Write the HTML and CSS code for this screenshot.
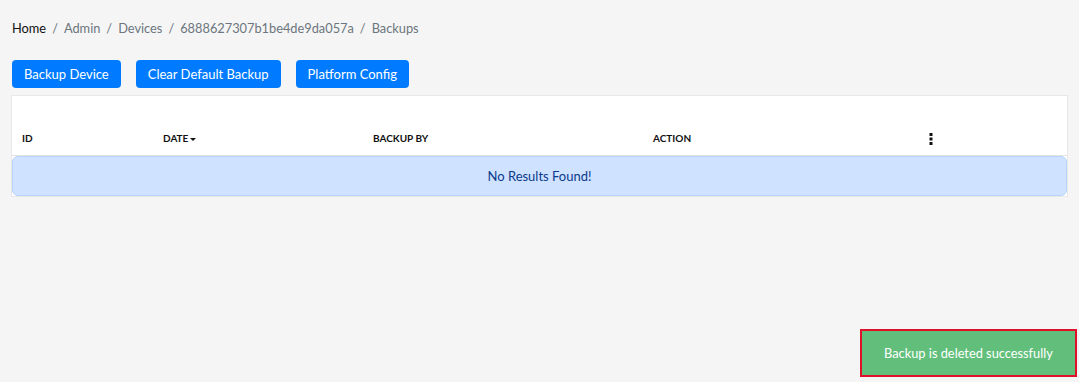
FILE: index.html
```html
<!DOCTYPE html>
<html lang="en">
<head>
    <meta charset="UTF-8">
    <meta name="viewport" content="width=device-width, initial-scale=1.0">
    <title>Backups</title>
    <link rel="stylesheet" href="styles.css">
</head>
<body>
    <nav class="breadcrumb">
        <span class="crumb active">Home</span>
        <span class="sep">/</span>
        <span class="crumb">Admin</span>
        <span class="sep">/</span>
        <span class="crumb">Devices</span>
        <span class="sep">/</span>
        <span class="crumb">6888627307b1be4de9da057a</span>
        <span class="sep">/</span>
        <span class="crumb">Backups</span>
    </nav>
    <div class="actions">
        <button class="btn">Backup Device</button>
        <button class="btn">Clear Default Backup</button>
        <button class="btn">Platform Config</button>
    </div>
    <div class="table">
        <div class="table-head">
            <div class="th">ID</div>
            <div class="th">DATE <span class="caret"></span></div>
            <div class="th">BACKUP BY</div>
            <div class="th">ACTION</div>
            <div class="th">
                <svg class="kebab" width="4" height="12" viewBox="0 0 4 12">
                    <rect x="0.5" y="0" width="3" height="3" fill="#111"/>
                    <rect x="0.5" y="4.5" width="3" height="3" fill="#111"/>
                    <rect x="0.5" y="9" width="3" height="3" fill="#111"/>
                </svg>
            </div>
        </div>
        <div class="empty">No Results Found!</div>
    </div>
    <div class="toast">Backup is deleted successfully</div>
</body>
</html>
```

FILE: styles.css
```css
body {
    margin: 0;
    padding: 18px 12px 0 12px;
    height: 382px;
    box-sizing: border-box;
    background-color: #f5f5f5;
    font-family: Lato, "Open Sans", sans-serif;
    color: #212529;
}
.breadcrumb {
    display: flex;
    gap: 6px;
    font-size: 12.8px;
    line-height: 20px;
    color: #6c757d;
}
.crumb.active { color: #111; }
.sep { color: #6c757d; }
.actions {
    display: flex;
    gap: 15px;
    margin-top: 22px;
}
.btn {
    height: 28px;
    padding: 0 12px;
    font-family: Lato, sans-serif;
    font-size: 13px;
    color: white;
    background: #007bff;
    border: none;
    border-radius: 4px;
}
.table {
    margin-top: 7px;
    margin-left: -1px;
    width: 1055px;
    background: white;
    border: 1px solid #e8e8e8;
}
.table-head {
    display: grid;
    grid-template-columns: 141px 210px 280px 275px 1fr;
    height: 59px;
    align-items: end;
    border-bottom: 1px solid #e3e3e3;
}
.th {
    padding: 0 0 10px 10px;
    font-size: 10px;
    font-weight: bold;
    color: #111;
    line-height: 14px;
}
.caret {
    display: inline-block;
    width: 0;
    height: 0;
    border-left: 3px solid transparent;
    border-right: 3px solid transparent;
    border-top: 3px solid #111;
    vertical-align: middle;
    margin-left: -1px;
}
.kebab { vertical-align: middle; margin-left: 1px; }
.empty {
    height: 38px;
    line-height: 38px;
    text-align: center;
    font-size: 13px;
    color: #0a3a8c;
    background: #cfe2ff;
    border: 1px solid #b6d4fe;
    border-radius: 6px;
}
.toast {
    position: absolute;
    left: 860px;
    top: 329px;
    width: 213px;
    height: 44px;
    line-height: 44px;
    text-align: center;
    font-size: 12.8px;
    color: white;
    background: #62bf7b;
    border: 2px solid #e0102a;
}
```
